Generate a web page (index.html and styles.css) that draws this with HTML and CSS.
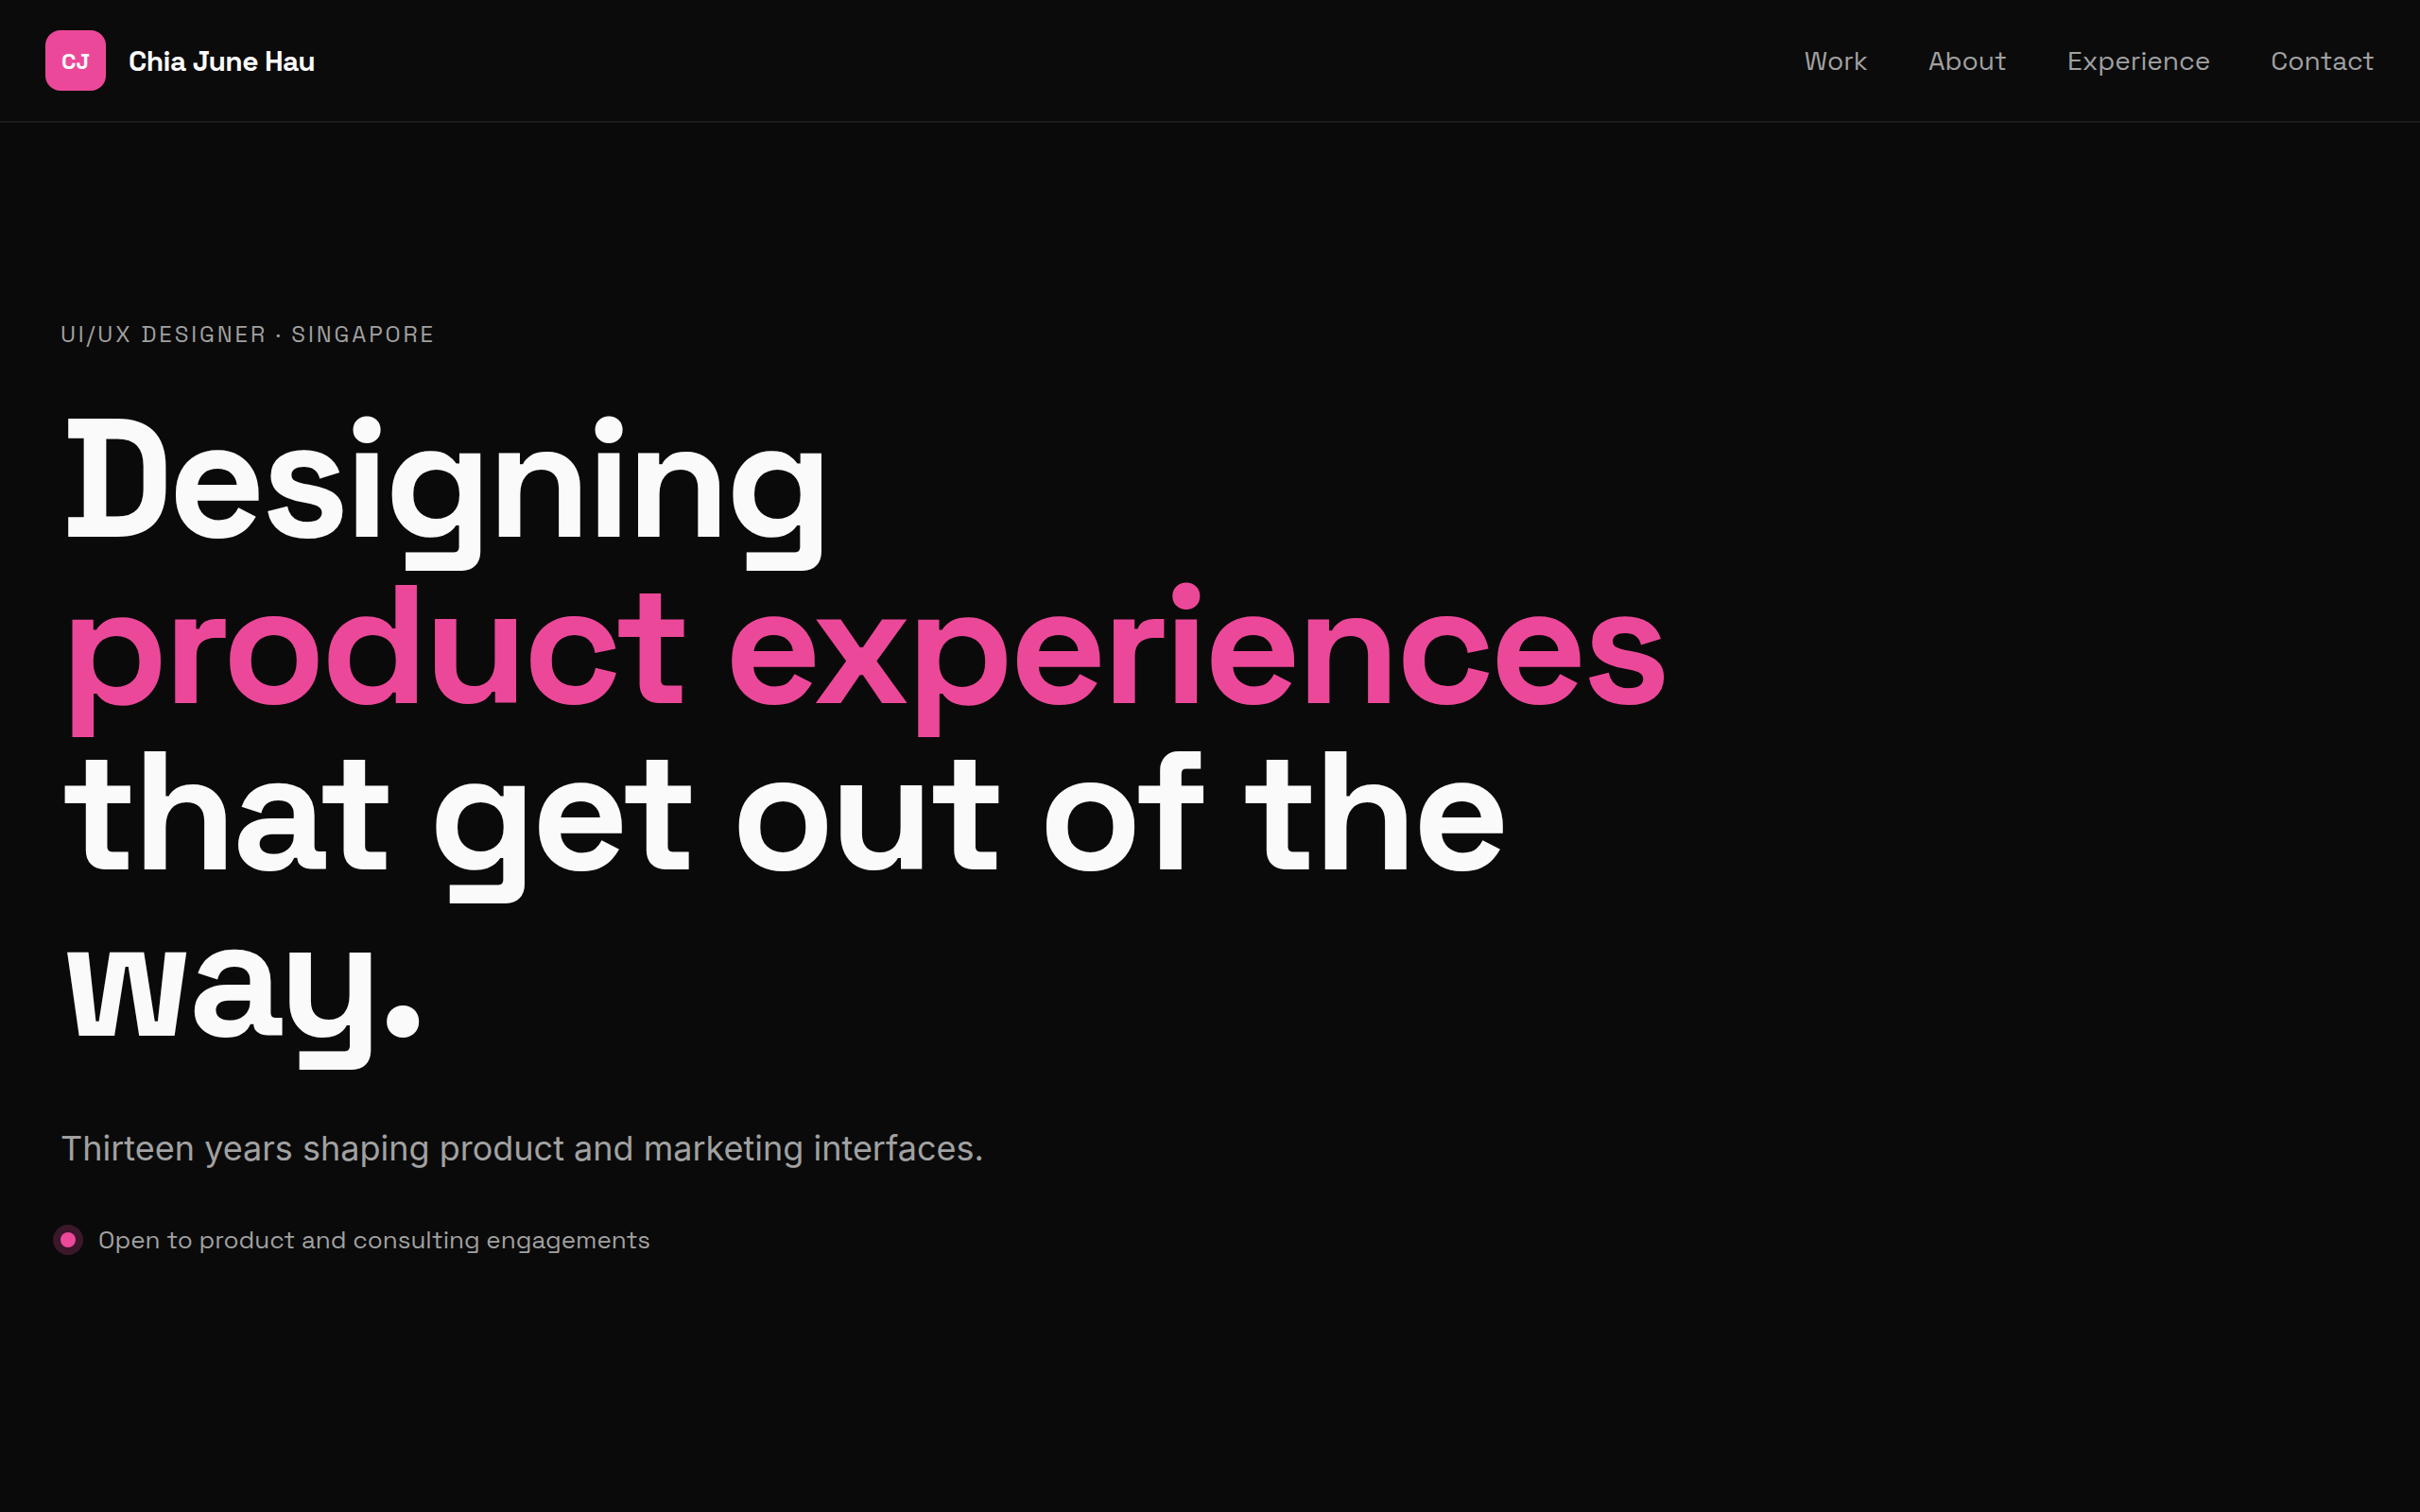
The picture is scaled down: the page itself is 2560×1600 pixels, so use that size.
FILE: index.html
```html
<!DOCTYPE html>
<html lang="en">
<head>
<meta charset="utf-8">
<meta name="viewport" content="width=device-width, initial-scale=1">
<title>Chia June Hau</title>
<link rel="stylesheet" href="styles.css">
</head>
<body>
<header class="site-header">
  <a class="brand" href="#top">
    <span class="brand-mark">CJ</span>
    <span class="brand-name">Chia June Hau</span>
  </a>
  <nav class="site-nav">
    <a href="#work">Work</a>
    <a href="#about">About</a>
    <a href="#experience">Experience</a>
    <a href="#contact">Contact</a>
  </nav>
</header>
<main class="hero" id="top">
  <p class="eyebrow">UI/UX Designer · Singapore</p>
  <h1 class="headline">Designing<br><span class="accent">product experiences</span><br>that get out of the<br>way.</h1>
  <p class="lead">Thirteen years shaping product and marketing interfaces.</p>
  <p class="status"><span class="status-dot"></span>Open to product and consulting engagements</p>
</main>
</body>
</html>
```
FILE: styles.css
```css
* {
  box-sizing: border-box;
}

body {
  margin: 0;
  min-height: 100vh;
  display: flex;
  flex-direction: column;
  background: #0a0a0a;
  color: #fafafa;
  font-family: "Space Grotesk", Inter, sans-serif;
}

a {
  color: inherit;
  text-decoration: none;
}

.site-header {
  display: flex;
  align-items: center;
  justify-content: space-between;
  padding: 32px 48px;
  border-bottom: 2px solid #1c1c1c;
  background: #0b0b0b;
}

.brand {
  display: flex;
  align-items: center;
  gap: 24px;
}

.brand-mark {
  display: grid;
  place-items: center;
  width: 64px;
  height: 64px;
  border-radius: 16px;
  background: #ec4899;
  font-size: 24px;
  font-weight: 600;
}

.brand-name {
  font-size: 30px;
  font-weight: 600;
  letter-spacing: -0.02em;
}

.site-nav {
  display: flex;
  gap: 64px;
  color: #a1a1a1;
  font-size: 28px;
  line-height: 46px;
}

.hero {
  flex: 1;
  padding: 208px 64px 0;
}

.eyebrow {
  margin: 0 0 48px;
  color: #a1a1a1;
  font-size: 24px;
  line-height: 32px;
  letter-spacing: 0.12em;
  text-transform: uppercase;
}

.headline {
  margin: 0 0 64px;
  font-size: 179px;
  font-weight: 700;
  line-height: 176px;
  letter-spacing: -0.03em;
}

.accent {
  color: #ec4899;
}

.lead {
  margin: 0 0 48px;
  color: #a1a1a1;
  font-family: Inter, sans-serif;
  font-size: 36px;
  line-height: 58px;
}

.status {
  display: flex;
  align-items: center;
  gap: 24px;
  margin: 0;
  color: #a1a1a1;
  font-size: 26px;
  line-height: 40px;
}

.status-dot {
  width: 16px;
  height: 16px;
  border-radius: 50%;
  background: #ec4899;
  box-shadow: 0 0 0 8px rgb(236 72 153 / 22%);
}
```
